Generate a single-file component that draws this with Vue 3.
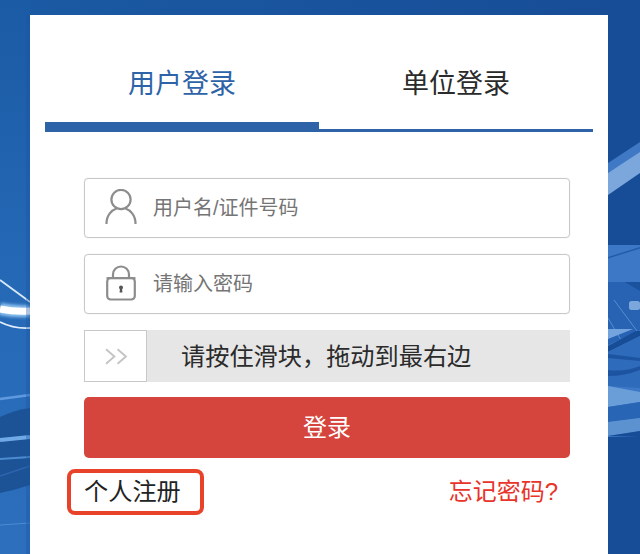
<script setup>
const tabs = [
  { label: '用户登录', active: true },
  { label: '单位登录', active: false },
]
</script>

<template>
  <div class="page">
    <svg class="bg" viewBox="0 0 640 554" preserveAspectRatio="none" aria-hidden="true">
      <defs>
        <linearGradient id="bgl" x1="0" y1="0" x2="0" y2="1">
          <stop offset="0" stop-color="#1b5aa4" />
          <stop offset="0.5" stop-color="#2569b6" />
          <stop offset="1" stop-color="#2d6fbd" />
        </linearGradient>
        <linearGradient id="bgt" x1="0" y1="0" x2="1" y2="0">
          <stop offset="0" stop-color="#1b5aa4" />
          <stop offset="1" stop-color="#174c96" />
        </linearGradient>
        <filter id="glow" filterUnits="userSpaceOnUse" x="-10" y="280" width="60" height="60">
          <feGaussianBlur stdDeviation="1.8" />
        </filter>
        <filter id="soft" filterUnits="userSpaceOnUse" x="-10" y="260" width="60" height="280">
          <feGaussianBlur stdDeviation="0.7" />
        </filter>
      </defs>
      <rect width="640" height="554" fill="#174c96" />
      <rect width="640" height="15" fill="url(#bgt)" />
      <rect width="30" height="554" fill="url(#bgl)" />
      <g filter="url(#soft)">
        <path d="M0 280 L30 302" stroke="#d6e8f8" stroke-width="1.8" fill="none" />
        <path d="M0 322 Q14 329 30 328" stroke="#e2eefa" stroke-width="1.8" fill="none" />
        <path d="M0 399 L30 395" stroke="#5e9ae0" stroke-width="2.5" fill="none" />
        <path d="M0 417 Q15 410 30 408 L30 485 Q15 490 0 493 Z" fill="#1c5296" />
        <path d="M0 440 L30 437" stroke="#70aae6" stroke-width="4" fill="none" />
        <path d="M0 459 L30 457" stroke="#4d8bd0" stroke-width="2" fill="none" />
        <path d="M0 476 L30 466" stroke="#2b65ad" stroke-width="1.5" fill="none" />
        <path d="M0 525 L30 523" stroke="#4c8bd2" stroke-width="1" fill="none" />
      </g>
      <path d="M0 309 Q15 312 30 311" stroke="#8fc3f0" stroke-width="12" fill="none" filter="url(#glow)" />
      <path d="M0 309 Q15 312 30 311" stroke="#ffffff" stroke-width="7" fill="none" filter="url(#soft)" />
      <rect x="26" y="15" width="4" height="539" fill="#1a52a0" opacity="0.35" />

      <path d="M608 163 L640 142 L640 154 L608 173 Z" fill="#3f78c4" />
      <path d="M608 173 L640 152 L640 173 L608 195 Z" fill="#7ba7dc" />
      <rect x="608" y="245" width="32" height="192" fill="#3d78c6" />
      <path d="M608 257 L640 247 L640 248.5 L608 258.5 Z" fill="#1f5ba8" />
      <path d="M608 282 H640 V330 L608 345 Z" fill="#2862b2" />
      <path d="M625 282 H640 V291 Z" fill="#1b529e" />
      <path d="M608 318 L624 345 M614 300 L640 335" stroke="#4f91d0" stroke-width="1" fill="none" />
      <path d="M608 329 L633 329 L608 339 Z" fill="#74a4de" />
      <path d="M608 346 L636 331 L640 331 L640 336 L608 352 Z" fill="#174c96" />
      <path d="M608 352 L640 336 V388 L608 386 Z" fill="#2e6bba" />
      <path d="M608 354 L640 358 V361 L608 358 Z" fill="#1d54a2" />
      <path d="M608 370 Q625 372 640 366 V370 Q625 376 608 376 Z" fill="#1d54a2" />
      <path d="M608 386 L640 392 V402 L608 407 Z" fill="#6a9ed8" />
      <path d="M608 407 L640 402 L640 418 L608 422 Z" fill="#2865b5" />
      <path d="M608 422 L640 418 L640 431 L608 436 Z" fill="#5c92d0" />
      <path d="M608 436 L640 431 V437 Z" fill="#174c96" />
      <rect x="629" y="301" width="11" height="9" rx="2.5" fill="#7ba7dc" />
    </svg>

    <main class="card">
      <nav class="tabs">
        <div v-for="t in tabs" :key="t.label" class="tab" :class="{ active: t.active }">{{ t.label }}</div>
      </nav>

      <form class="form" @submit.prevent>
        <div class="field">
          <svg class="ico user" viewBox="0 0 32 35" fill="none" stroke="#8d8d8d" stroke-width="2.2">
            <circle cx="16" cy="10.5" r="9.6" />
            <path d="M1.5 34.5 C1.5 26 7 21 11.5 19.5 M30.5 34.5 C30.5 26 25 21 20.5 19.5" stroke-linecap="round" />
          </svg>
          <span class="ph">用户名/证件号码</span>
        </div>
        <div class="field">
          <svg class="ico lock" viewBox="0 0 32 36" fill="none" stroke="#8d8d8d" stroke-width="2.2">
            <path d="M8 13 V9.5 A8 8 0 0 1 24 9.5 V13" />
            <rect x="2.2" y="13" width="27.6" height="21.5" rx="3.5" />
            <path d="M1.5 13.2 H30.5" />
            <circle cx="16" cy="22.5" r="2" fill="#555" stroke="none" />
            <path d="M15 23 H17 L17.4 27.5 H14.6 Z" fill="#555" stroke="none" />
          </svg>
          <span class="ph">请输入密码</span>
        </div>
        <div class="slider">
          <div class="handle">
            <svg class="chev" viewBox="0 0 22 16" fill="none" stroke="#c4c4c4" stroke-width="1.8">
              <path d="M1 1 L9 8 L1 15 M12 1 L20 8 L12 15" />
            </svg>
          </div>
          <span class="hint">请按住滑块，拖动到最右边</span>
        </div>
        <button class="submit" type="button">登录</button>
        <div class="links">
          <a class="reg">个人注册</a>
          <a class="forgot">忘记密码?</a>
        </div>
      </form>
    </main>
  </div>
</template>

<style scoped>
.page {
  position: relative;
  width: 640px;
  height: 554px;
  overflow: hidden;
  box-sizing: border-box;
  padding: 15px 32px 0 30px;
  font-family: "Liberation Sans", "Noto Sans CJK SC", sans-serif;
}
.bg {
  position: absolute;
  inset: 0;
  width: 640px;
  height: 554px;
}
.card {
  position: relative;
  height: 539px;
  box-sizing: border-box;
  padding: 0 15px;
  background: #fff;
}
.tabs {
  display: flex;
  height: 117px;
}
.tab {
  flex: 1;
  box-sizing: border-box;
  height: 117px;
  padding-top: 49px;
  line-height: 40px;
  text-align: center;
  font-size: 27px;
  color: #2b2b2b;
  border-bottom: 3px solid #2f63a8;
}
.tab.active {
  color: #2f63a8;
  border-bottom-width: 10px;
}
.form {
  display: flex;
  flex-direction: column;
  padding: 46px 23px 0 39px;
}
.field {
  display: flex;
  align-items: center;
  height: 60px;
  box-sizing: border-box;
  margin-bottom: 16px;
  padding-left: 20px;
  border: 1px solid #c8c8c8;
  border-radius: 4px;
  box-shadow: 0 0 1px #d4d4d4;
}
.ico {
  width: 32px;
  height: 35px;
  flex: none;
  margin-bottom: 4px;
}
.lock {
  height: 36px;
  margin-bottom: 2px;
}
.ph {
  margin-left: 16px;
  padding-bottom: 4px;
  font-size: 20px;
  color: #757575;
}
.slider {
  display: flex;
  align-items: center;
  height: 52px;
  background: #e6e6e6;
  margin-bottom: 15px;
}
.handle {
  display: flex;
  align-items: center;
  justify-content: center;
  width: 63px;
  height: 52px;
  box-sizing: border-box;
  padding-left: 2px;
  background: #fff;
  border: 1.5px solid #c8c8c8;
}
.chev {
  width: 23px;
  height: 17px;
}
.hint {
  margin-left: 34px;
  padding-bottom: 4px;
  font-size: 24.2px;
  color: #2b2b2b;
}
.submit {
  height: 61px;
  padding: 0 0 4px;
  border: 0;
  border-radius: 5px;
  background: #d6453d;
  color: #fff;
  font: inherit;
  font-size: 24px;
}
.links {
  display: flex;
  align-items: center;
  justify-content: space-between;
  margin-top: 11px;
  margin-left: -17px;
  margin-right: 12px;
}
.reg {
  display: block;
  width: 137px;
  height: 46px;
  line-height: 38px;
  box-sizing: border-box;
  padding-left: 13px;
  border: 4px solid #e8432a;
  border-radius: 8px;
  font-size: 24.2px;
  color: #222;
}
.forgot {
  padding-bottom: 6px;
  font-size: 24px;
  color: #e8342a;
}
</style>
